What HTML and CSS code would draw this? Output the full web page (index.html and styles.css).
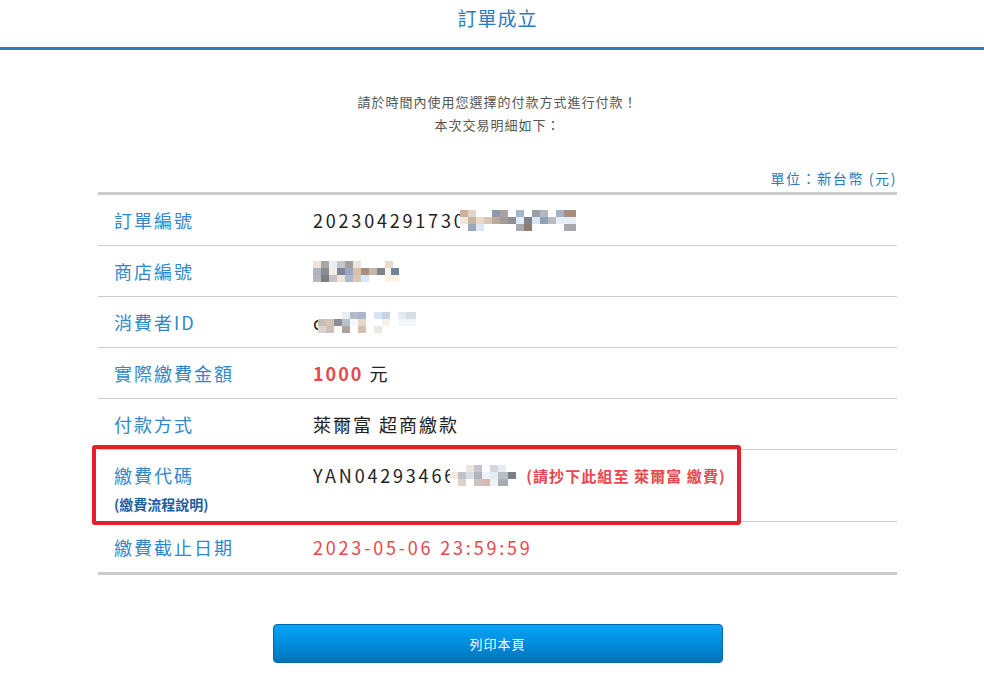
FILE: index.html
```html
<!DOCTYPE html>
<html lang="zh-Hant">

<head>
    <meta charset="UTF-8">
    <meta name="viewport" content="width=device-width, initial-scale=1.0">
    <title>訂單成立</title>
    <link rel="stylesheet" href="styles.css">
</head>

<body>
    <div class="header">
        <h1 class="title">訂單成立</h1>
    </div>

    <div class="page">
        <div class="notice">
            <p>請於時間內使用您選擇的付款方式進行付款！</p>
            <p>本次交易明細如下：</p>
        </div>

        <div class="unit">單位：新台幣 (元)</div>

        <div class="detail-wrap">
            <table class="detail">
                <tr>
                    <th>訂單編號</th>
                    <td><span class="num">20230429173</span><span class="cut">0</span><span class="mosaic m-order"></span></td>
                </tr>
                <tr>
                    <th>商店編號</th>
                    <td><span class="mosaic m-store"></span></td>
                </tr>
                <tr>
                    <th>消費者ID</th>
                    <td><span class="cut small">c</span><span class="mosaic m-user"></span></td>
                </tr>
                <tr>
                    <th>實際繳費金額</th>
                    <td><span class="amount">1000</span> 元</td>
                </tr>
                <tr>
                    <th>付款方式</th>
                    <td>萊爾富 超商繳款</td>
                </tr>
                <tr class="code-row">
                    <th>
                        繳費代碼
                        <a class="howto" href="#">(繳費流程說明)</a>
                    </th>
                    <td><span class="num">YAN0429346</span><span class="cut">6</span><span class="mosaic m-code"></span><span class="hint">(請抄下此組至 萊爾富 繳費)</span></td>
                </tr>
                <tr>
                    <th>繳費截止日期</th>
                    <td class="deadline"><span class="num">2023-05-06 23:59:59</span></td>
                </tr>
            </table>
            <div class="mark"></div>
        </div>

        <div class="actions">
            <button class="print-btn" onclick="window.print()">列印本頁</button>
        </div>
    </div>
</body>

</html>
```

FILE: styles.css
```css
body {
    margin: 0;
    font-family: "Noto Sans CJK TC", "Noto Sans", sans-serif;
    background-color: #ffffff;
    color: #222;
}

.header {
    border-bottom: 3px solid #2b7fc0;
}

.title {
    margin: 0;
    padding: 6px 0 17px 11px;
    font-size: 19px;
    font-weight: normal;
    line-height: 24px;
    letter-spacing: 1px;
    text-align: center;
    color: #2a7bbd;
}

.page {
    padding-left: 11px;
}

.notice {
    margin-top: 40px;
    text-align: center;
    font-size: 13px;
    letter-spacing: 1px;
    color: #555;
}

.notice p {
    margin: 0;
    line-height: 23px;
}

.unit {
    width: 799px;
    margin: 32px auto 4px;
    text-align: right;
    font-size: 14px;
    line-height: 20px;
    letter-spacing: 1.6px;
    color: #2a7bbd;
}

.detail-wrap {
    position: relative;
    width: 799px;
    margin: 0 auto;
}

.detail {
    width: 100%;
    border-collapse: collapse;
    border-top: 3px solid #cccccc;
    border-bottom: 3px solid #cccccc;
}

.detail tr {
    border-top: 1px solid #cccccc;
}

.detail tr:first-child {
    border-top: none;
}

.detail th,
.detail td {
    padding: 13px 0 13px 16px;
    font-size: 18px;
    line-height: 24px;
    letter-spacing: 2px;
    text-align: left;
    vertical-align: top;
    white-space: nowrap;
}

.detail th {
    width: 199px;
    font-weight: normal;
    color: #3088cb;
}

.detail td {
    padding-left: 0;
    color: #222;
}

.num {
    letter-spacing: 2.8px;
}

.code-row th,
.code-row td {
    padding-bottom: 8px;
}

.howto {
    display: block;
    margin-top: 8px;
    font-size: 14px;
    line-height: 18px;
    font-weight: bold;
    letter-spacing: 0;
    color: #1f5f9e;
    text-decoration: none;
}

.amount {
    font-weight: bold;
    color: #e8474c;
}

.hint {
    margin-left: 10px;
    font-size: 15px;
    font-weight: bold;
    letter-spacing: 1.1px;
    color: #e8474c;
    vertical-align: 1px;
}

.deadline {
    color: #e8474c !important;
}

.cut {
    display: inline-block;
    width: 6px;
    height: 24px;
    overflow: hidden;
    vertical-align: top;
}

.cut.small {
    width: 5px;
}

/* pixelated parts of the screenshot: three rows of 8px blocks */
.mosaic {
    display: inline-block;
    height: 21px;
    margin-top: 2px;
    vertical-align: top;
    background-repeat: no-repeat;
    background-size: 100% 7px;
    background-position: 0 0, 0 7px, 0 14px;
}

.m-order {
    width: 116px;
    background-image:
        linear-gradient(90deg, #ccb39e 0 8px, #e3d4c6 8px 16px, transparent 16px 32px, #8e9bae 32px 40px, #a9a3a0 40px 48px, transparent 48px 56px, #a6b5c9 56px 64px, transparent 64px 72px, #999ea7 72px 80px, #b3b8c0 80px 88px, transparent 88px 96px, #a4b2c6 96px 104px, #a88d7c 104px 116px),
        linear-gradient(90deg, #f2e6dc 0 8px, #c7b6a2 8px 16px, #e9d9c6 16px 24px, #d8c6b3 24px 32px, #b9aa9b 32px 40px, #a59b92 40px 48px, #8f8f96 48px 56px, #e3edf7 56px 64px, #80838c 64px 72px, #d9e6f3 72px 80px, #8fa1b7 80px 88px, #b7bcc4 88px 96px, #e7eef6 96px 116px),
        linear-gradient(90deg, transparent 0 8px, #9aa7b8 8px 16px, #dceaf8 16px 24px, transparent 24px 56px, #a9a9b0 56px 64px, #8d7d72 64px 72px, transparent 72px 104px, #a8a8ad 104px 116px);
}

.m-store {
    width: 86px;
    background-image:
        linear-gradient(90deg, #f1e1d6 0 8px, #a9a6a3 8px 16px, #e7eef7 16px 24px, #c6c5d0 24px 32px, #a59e99 32px 40px, #f0e4e0 40px 48px, transparent 48px 72px, #e8dccb 72px 80px, transparent 80px 86px),
        linear-gradient(90deg, #aab3bf 0 8px, #868c95 8px 16px, #f4ede4 16px 24px, #7f8590 24px 32px, #98a6c2 32px 40px, #d9c2ab 40px 48px, #a58f80 48px 56px, #c9b6a4 56px 64px, #7d828b 64px 72px, #f8f3ec 72px 78px, #6f8396 78px 86px),
        linear-gradient(90deg, #b9b7b6 0 8px, #7d7d84 8px 16px, #c3c3c9 16px 24px, #f0e4d8 24px 32px, #aeb8cc 32px 40px, #dcc7b5 40px 48px, #d7e8f7 48px 56px, transparent 56px 72px, #fbf2e4 72px 86px);
}

.m-user {
    width: 98px;
    background-image:
        linear-gradient(90deg, transparent 0 24px, #e9eef6 24px 32px, #b2bcc6 32px 40px, #a9b5d1 40px 48px, transparent 48px 56px, #d6e5f4 56px 64px, #c6d3e3 64px 72px, transparent 72px 80px, #e3ebf6 80px 88px, #d6dde4 88px 96px),
        linear-gradient(90deg, #c8bdb6 0 8px, #d7c5b3 8px 16px, #8c8c95 16px 24px, #b7c1cd 24px 32px, #f5f8fb 32px 40px, #e6d8c6 40px 48px, transparent 48px 64px, #f6f1ea 64px 72px, transparent 72px 80px, #f2f6fa 80px 88px),
        linear-gradient(90deg, #ddd3cc 0 8px, #c9bfbb 8px 16px, transparent 16px 24px, #b0a19a 24px 32px, transparent 32px 40px, #d1c0b1 40px 48px, transparent 48px 56px, #ece7e0 56px 64px, transparent 64px 98px);
}

.m-code {
    width: 66px;
    background-image:
        linear-gradient(90deg, transparent 0 16px, #ece6df 16px 24px, #c4c4cc 24px 32px, transparent 32px 40px, #d2d7de 40px 48px, #e8ecf2 48px 56px, transparent 56px 66px),
        linear-gradient(90deg, #f4ecdf 0 8px, #bfc3cc 8px 16px, #d9dde4 16px 24px, #b0b4bd 24px 32px, #eef3f8 32px 40px, #e4edf6 40px 48px, #b9bdc4 48px 58px, #7b7f87 58px 66px),
        linear-gradient(90deg, transparent 0 8px, #ddd2c8 8px 16px, transparent 16px 24px, #c9c3c2 24px 32px, #d6b9b2 32px 40px, #eef3f8 40px 48px, #a9aeb6 48px 58px, transparent 58px 66px);
}

/* red highlight drawn on the screenshot */
.mark {
    position: absolute;
    top: 253px;
    left: -6px;
    width: 649px;
    height: 80px;
    box-sizing: border-box;
    border: 4px solid #e5202b;
    border-radius: 3px;
    pointer-events: none;
}

.actions {
    display: flex;
    justify-content: center;
    margin-top: 49px;
    padding-bottom: 20px;
}

.print-btn {
    width: 450px;
    height: 39px;
    border: 1px solid #0069aa;
    border-radius: 4px;
    background: linear-gradient(to bottom, #0aa3f7 0%, #0090e0 45%, #0072bb 100%);
    color: #ffffff;
    font-family: "Noto Sans CJK TC", sans-serif;
    font-size: 13px;
    letter-spacing: 1px;
    cursor: pointer;
}

.print-btn:hover {
    background: #0082cc;
}
```
